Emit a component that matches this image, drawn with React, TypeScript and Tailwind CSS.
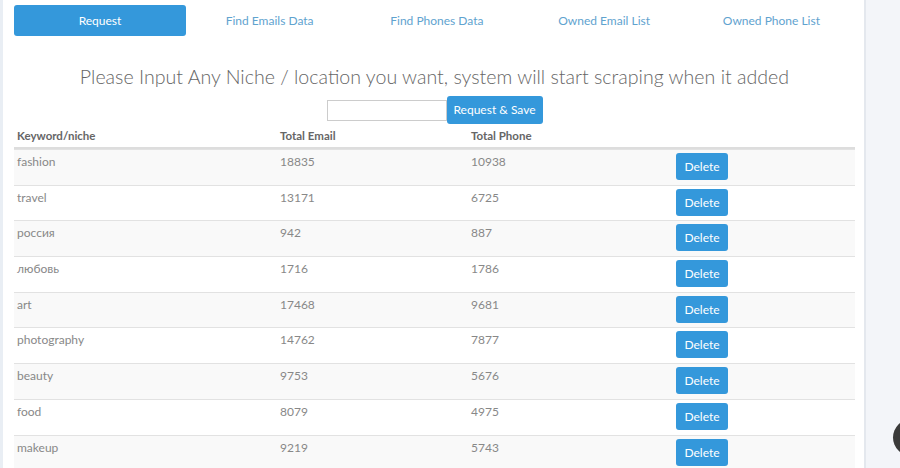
import React from "react";

const tabs = ["Find Emails Data", "Find Phones Data", "Owned Email List", "Owned Phone List"];

const rows = [
  { keyword: "fashion", email: "18835", phone: "10938" },
  { keyword: "travel", email: "13171", phone: "6725" },
  { keyword: "россия", email: "942", phone: "887" },
  { keyword: "любовь", email: "1716", phone: "1786" },
  { keyword: "art", email: "17468", phone: "9681" },
  { keyword: "photography", email: "14762", phone: "7877" },
  { keyword: "beauty", email: "9753", phone: "5676" },
  { keyword: "food", email: "8079", phone: "4975" },
  { keyword: "makeup", email: "9219", phone: "5743" },
];

const font = { fontFamily: "Lato, 'Open Sans', sans-serif" };

export default function App() {
  return (
    <div
      className="relative flex h-[468px] w-[900px] overflow-hidden bg-[#f3f5f9]"
      style={font}
    >
      <div className="w-[3px] shrink-0 bg-[#e9eef4]" />

      <main className="w-[863px] shrink-0 border-r-2 border-[#e4e8ee] bg-white pl-[11px] pr-[9px]">
        {/* tabs */}
        <nav className="flex pt-[5px]">
          <button className="h-[31px] w-[172px] shrink-0 rounded-[3px] bg-[#3498db] text-[12px] text-white">
            Request
          </button>
          {tabs.map((t) => (
            <a
              key={t}
              className="flex h-[31px] flex-1 items-center justify-center text-[12px] text-[#5fa3cf]"
            >
              {t}
            </a>
          ))}
        </nav>

        <h1 className="mt-[27px] text-center text-[19.6px] font-light leading-[28px] text-[#666]">
          Please Input Any Niche / location you want, system will start scraping when it added
        </h1>

        <div className="mt-[5px] flex items-center justify-center">
          <input
            type="text"
            className="h-[21px] w-[120px] border border-[#ccc] bg-white outline-none"
          />
          <button className="h-[28px] w-[96px] rounded-[3px] bg-[#3498db] text-[12px] text-white">
            Request &amp; Save
          </button>
        </div>

        {/* table */}
        <div className="grid grid-cols-[263px_191px_205px_1fr] border-b-2 border-[#dddddd] pt-[3px] pb-[3px] text-[11.5px] font-bold leading-[17px] text-[#666]">
          <div className="pl-[3px]">Keyword/niche</div>
          <div className="pl-[3px]">Total Email</div>
          <div className="pl-[3px]">Total Phone</div>
          <div />
        </div>
        {rows.map((r, i) => (
          <div
            key={r.keyword}
            className={
              "grid h-[35.7px] grid-cols-[263px_191px_205px_1fr] border-t border-[#e2e2e2] pt-[3px] text-[12px] leading-[17px] text-[#888] " +
              (i % 2 === 0 ? "bg-[#f9f9f9]" : "bg-white")
            }
          >
            <div className="pl-[3px]">{r.keyword}</div>
            <div className="pl-[3px]">{r.email}</div>
            <div className="pl-[3px]">{r.phone}</div>
            <div className="pl-[3px]">
              <button className="h-[27px] w-[52px] rounded-[3px] bg-[#3498db] text-[12px] text-white">
                Delete
              </button>
            </div>
          </div>
        ))}
      </main>

      <div className="flex-1" />

      {/* chat widget */}
      <div className="absolute left-[893px] top-[419px] h-[37px] w-[37px] rounded-full bg-[#3a3a3a]" />
    </div>
  );
}
